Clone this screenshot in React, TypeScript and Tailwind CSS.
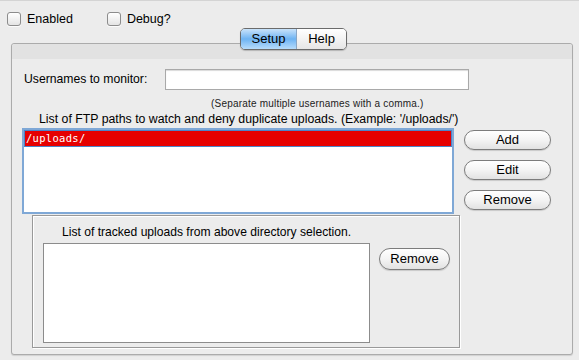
const font = "font-['Liberation_Sans',Arial,sans-serif]";

function Checkbox({ label }: { label: string }) {
  return (
    <label className="flex items-center gap-[6px] text-[12.5px] text-black">
      <span className="h-[14px] w-[14px] rounded-[3px] border border-[#8c8c8c] bg-gradient-to-b from-white to-[#e4e4e4] shadow-[0_1px_0_rgba(255,255,255,0.8)]" />
      {label}
    </label>
  );
}

function PillButton({ label, className }: { label: string; className: string }) {
  return (
    <button
      className={
        "flex items-center justify-center rounded-full border border-[#7c7c7c] bg-gradient-to-b from-white via-[#f4f4f4] to-[#e2e2e2] text-[13px] text-black shadow-[0_1px_1px_rgba(0,0,0,0.15)] " +
        className
      }
    >
      {label}
    </button>
  );
}

export default function App() {
  return (
    <div className={`h-[360px] w-[579px] overflow-hidden border-t border-[#d4d4d4] bg-[#ececec] ${font}`}>
      <div className="flex items-center pl-[7px] pt-[9px]">
        <Checkbox label="Enabled" />
        <div className="ml-[34px]">
          <Checkbox label="Debug?" />
        </div>
      </div>

      {/* tab switcher sits across the panel's top edge */}
      <div className="relative z-10 -mt-[1px] flex justify-center">
        <div className="ml-[8px] flex h-[22px] overflow-hidden rounded-[5px] border border-[#6b6b6b] text-[13px] shadow-[0_1px_1px_rgba(0,0,0,0.2)]">
          <div className="flex w-[56px] items-center justify-center border-r border-[#8aa6c4] bg-gradient-to-b from-[#c9e3fa] via-[#6db3f2] to-[#b7dcfb] text-black">
            Setup
          </div>
          <div className="flex w-[49px] items-center justify-center bg-gradient-to-b from-white via-[#f3f3f3] to-[#e6e6e6] text-black">
            Help
          </div>
        </div>
      </div>

      <div className="-mt-[7px] ml-[11px] h-[312px] w-[562px] rounded-[3px] border border-[#ababab] bg-[#ececec] shadow-[0_1px_1px_rgba(0,0,0,0.12)]">
        <div className="h-[15px] rounded-t-[3px] bg-[#e2e2e2]" />

        <div className="mt-[10px] flex items-center">
          <span className="w-[153px] pl-[12px] text-[12.2px] text-black">Usernames to monitor:</span>
          <div className="h-[21px] w-[304px] border border-[#a9a9a9] bg-white shadow-[inset_0_1px_1px_rgba(0,0,0,0.15)]" />
        </div>

        <div className="mt-[8px] pl-[199px] text-[10px] leading-[12px] tracking-[0.2px] text-[#222]">
          (Separate multiple usernames with a comma.)
        </div>

        <div className="mt-[2px] pl-[27px] text-[12.3px] leading-[15px] text-black">
          List of FTP paths to watch and deny duplicate uploads. (Example: '/uploads/')
        </div>

        <div className="mt-[1px] flex">
          <div className="ml-[10px] h-[86px] w-[432px] border-2 border-[#7fa8d6] bg-white">
            <div className="h-[17px] border border-[#4d84c7] bg-[#e60000] pl-[1px] font-['DejaVu_Sans_Mono',monospace] text-[10.5px] leading-[15px] tracking-[0.3px] text-white">
              /uploads/
            </div>
          </div>
          <div className="ml-[10px] mt-[2px] flex flex-col gap-[10px]">
            <PillButton label="Add" className="h-[20px] w-[87px]" />
            <PillButton label="Edit" className="h-[20px] w-[87px]" />
            <PillButton label="Remove" className="h-[20px] w-[87px]" />
          </div>
        </div>

        <div className="ml-[20px] mt-[1px] h-[133px] w-[428px] border border-[#999] shadow-[inset_1px_1px_0_white,1px_1px_0_white]">
          <div className="mt-[9px] pl-[29px] text-[12.1px] leading-[15px] text-black">
            List of tracked uploads from above directory selection.
          </div>
          <div className="mt-[3px] flex">
            <div className="ml-[10px] h-[100px] w-[327px] border border-[#8c8c8c] bg-white" />
            <PillButton label="Remove" className="ml-[9px] mt-[5px] h-[22px] w-[71px]" />
          </div>
        </div>
      </div>
    </div>
  );
}
